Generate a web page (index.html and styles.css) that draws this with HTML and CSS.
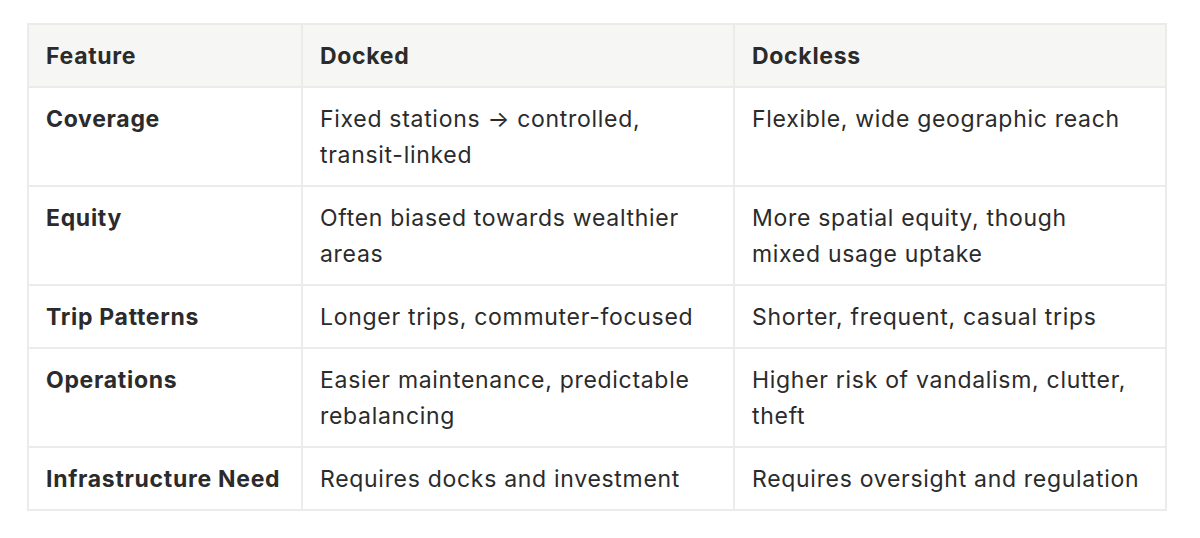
FILE: index.html
```html
<!DOCTYPE html>
<html>
<head>
<meta charset="utf-8">
<link rel="stylesheet" href="styles.css">
</head>
<body>
<div class="page">
<table class="cmp">
<colgroup><col class="c1"><col class="c2"><col class="c3"></colgroup>
<thead>
<tr><th class="k">Feature</th><th>Docked</th><th>Dockless</th></tr>
</thead>
<tbody>
<tr><td class="k">Coverage</td><td>Fixed stations → controlled, transit-linked</td><td>Flexible, wide geographic reach</td></tr>
<tr><td class="k">Equity</td><td>Often biased towards wealthier areas</td><td>More spatial equity, though mixed usage uptake</td></tr>
<tr><td class="k">Trip Patterns</td><td>Longer trips, commuter-focused</td><td>Shorter, frequent, casual trips</td></tr>
<tr><td class="k">Operations</td><td>Easier maintenance, predictable rebalancing</td><td>Higher risk of vandalism, clutter, theft</td></tr>
<tr><td class="k">Infrastructure Need</td><td>Requires docks and investment</td><td>Requires oversight and regulation</td></tr>
</tbody>
</table>
</div>
</body>
</html>
```
FILE: styles.css
```css
html, body { margin: 0; padding: 0; background: #ffffff; }
.page { padding: 23px 0 0 27px; }
.cmp {
  border-collapse: collapse;
  width: 1138px;
  table-layout: fixed;
  font-family: Inter, "Noto Sans", sans-serif;
  font-size: 23px;
  letter-spacing: 0.7px;
  line-height: 36px;
  color: #2b2b2b;
}
.c1 { width: 274px; }
.c2 { width: 432px; }
.c3 { width: 432px; }
.cmp th, .cmp td {
  border: 2px solid #ebebe9;
  padding: 13px 24px 12px 17px;
  text-align: left;
  vertical-align: top;
}
.cmp th { background: #f6f6f4; font-weight: 700; }
.cmp td { font-weight: 400; }
.cmp .k { font-weight: 700; padding-right: 6px; }
```
